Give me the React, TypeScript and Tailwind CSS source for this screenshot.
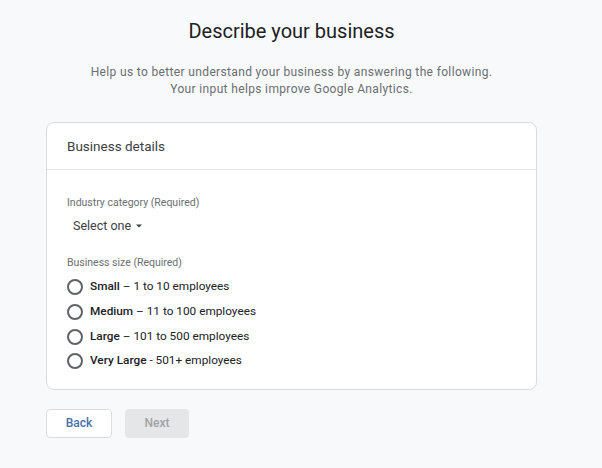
import React from "react";

const sizes = [
  { bold: "Small", rest: " – 1 to 10 employees" },
  { bold: "Medium", rest: " – 11 to 100 employees" },
  { bold: "Large", rest: " – 101 to 500 employees" },
  { bold: "Very Large", rest: " - 501+ employees" },
];

export default function App() {
  return (
    <div
      className="w-full min-h-[468px] bg-[#f8f9fa] text-[#202124]"
      style={{ fontFamily: "Roboto, 'Liberation Sans', sans-serif" }}
    >
      <div className="w-[583px] flex flex-col items-center pt-[17px]">
        <h1 className="text-[20px] leading-[28px] font-normal text-[#202124]">Describe your business</h1>
        <p className="mt-[19px] text-[12px] leading-[17px] tracking-[0.35px] text-[#6b6e72] text-center">
          Help us to better understand your business by answering the following.
          <br />
          Your input helps improve Google Analytics.
        </p>
        <div className="mt-[24px] w-[491px] bg-white border border-[#dadce0] rounded-[8px]">
          <div className="h-[46px] flex items-center px-[20px] text-[13.5px] text-[#3c4043]">Business details</div>
          <div className="border-t border-[#e4e6e9] px-[20px] pt-[25px] pb-[15px]">
            <div className="text-[10.5px] leading-[16px] text-[#6b6e72]">Industry category (Required)</div>
            <div className="mt-[5px] ml-[6px] h-[20px] flex items-center text-[12.5px] text-[#3c4043]">
              Select one
              <svg width="10" height="10" viewBox="0 0 10 10" className="ml-[3px]">
                <path d="M2 3.5 L8 3.5 L5 6.5 Z" fill="#3c4043" />
              </svg>
            </div>
            <div className="mt-[19px] text-[10.5px] leading-[16px] text-[#6b6e72]">Business size (Required)</div>
            <div className="mt-[4px] flex flex-col">
              {sizes.map((s) => (
                <div key={s.bold} className="h-[24.67px] flex items-center">
                  <span className="w-[16px] h-[16px] rounded-full border-2 border-[#5f6368] box-border" />
                  <span className="ml-[7px] text-[11.8px] text-[#202124]">
                    <span className="font-medium">{s.bold}</span>
                    {s.rest}
                  </span>
                </div>
              ))}
            </div>
          </div>
        </div>
        <div className="mt-[19px] w-[491px] flex gap-[13px]">
          <button className="w-[66px] h-[29px] rounded-[4px] border border-[#dadce0] bg-white text-[12px] font-medium text-[#4a6fa8]">
            Back
          </button>
          <button className="w-[64px] h-[29px] rounded-[4px] bg-[#e5e6e7] text-[12px] font-medium text-[#a0a3a6]">
            Next
          </button>
        </div>
      </div>
    </div>
  );
}
